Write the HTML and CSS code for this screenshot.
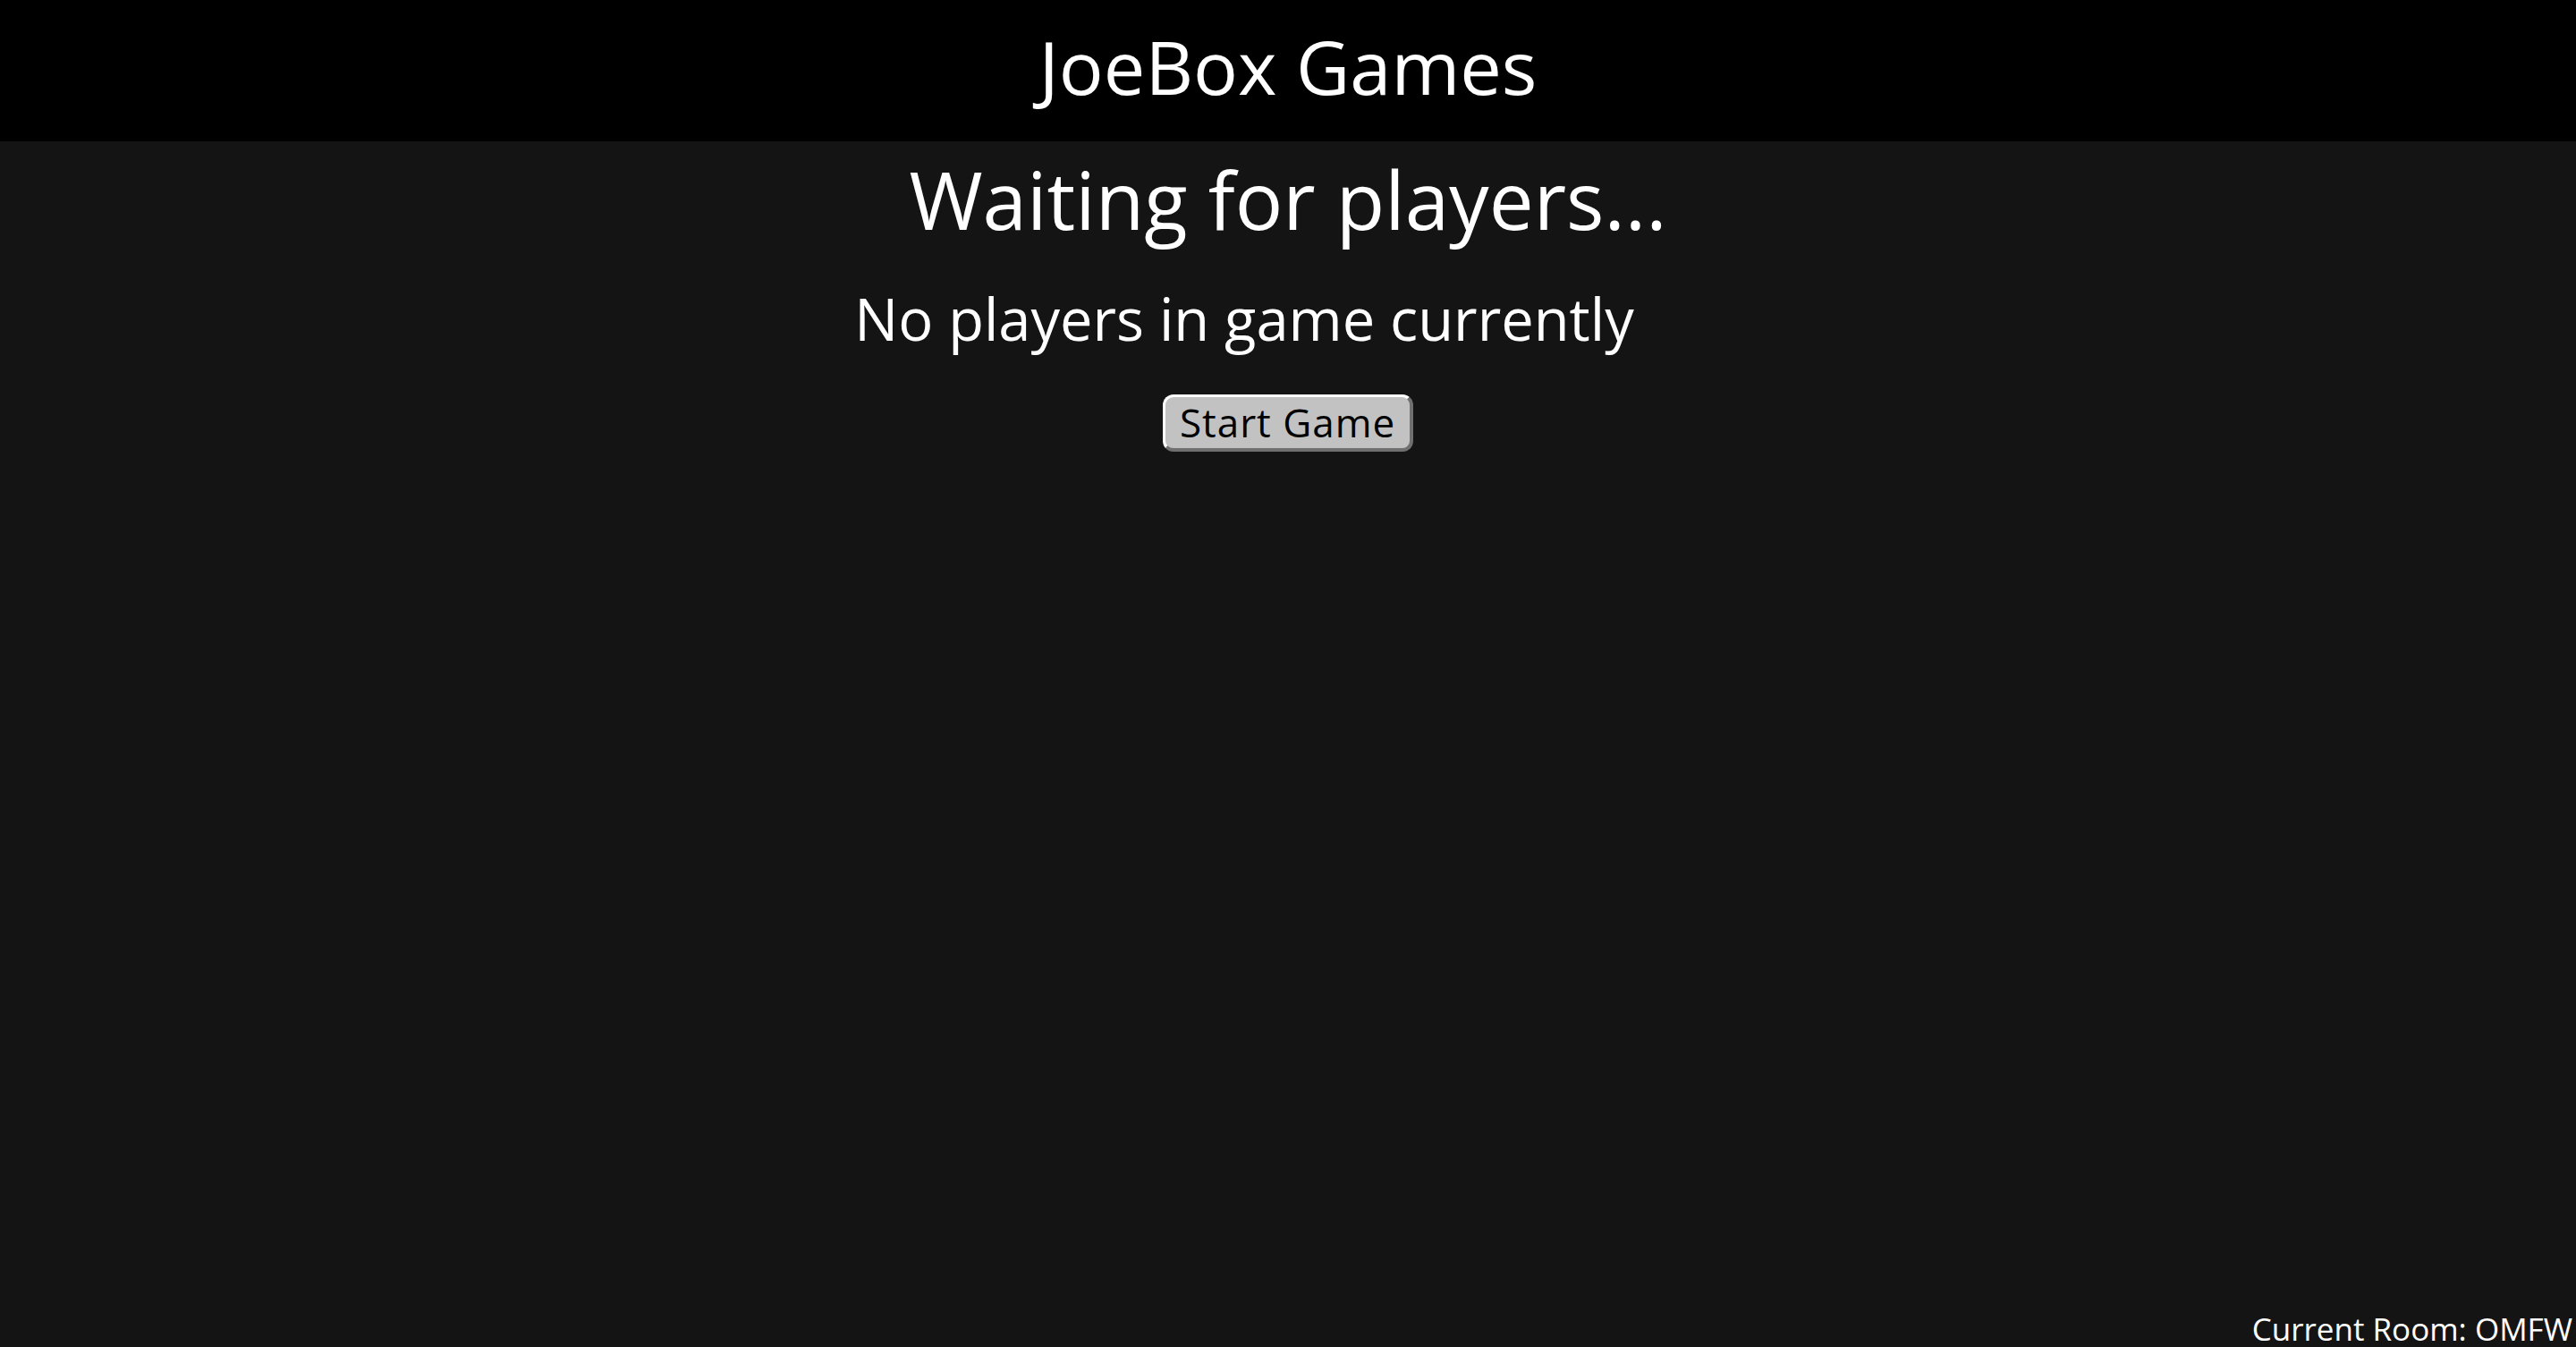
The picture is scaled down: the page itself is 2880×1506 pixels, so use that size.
FILE: index.html
```html
<!DOCTYPE html>
<html>
<head>
<meta charset="utf-8">
<link rel="stylesheet" href="styles.css">
</head>
<body>
<div class="app">
  <header class="topbar"><h1 class="brand">JoeBox Games</h1></header>
  <main class="lobby">
    <h2 class="status">Waiting for players...</h2>
    <p class="players">No players in game currently</p>
    <button class="start">Start Game</button>
  </main>
  <footer class="room">Current Room: OMFW</footer>
</div>
</body>
</html>
```
FILE: styles.css
```css
html, body {
  margin: 0;
  padding: 0;
  height: 100%;
}
body {
  background: #141414;
  color: #fff;
  font-family: "Open Sans", "Noto Sans", sans-serif;
}
.app {
  height: 100%;
  display: flex;
  flex-direction: column;
}
.topbar {
  background: #000;
  height: 158px;
  display: flex;
  align-items: center;
  justify-content: center;
}
.brand {
  margin: 0 0 12px;
  font-weight: 400;
  font-size: 83px;
  line-height: 1;
}
.lobby {
  flex: 1;
  display: flex;
  flex-direction: column;
  align-items: center;
}
.status {
  margin: 12px 0 0;
  font-weight: 400;
  font-size: 89px;
  line-height: 1.2;
}
.players {
  margin: 40px 0 0;
  padding-right: 98px;
  font-size: 65px;
  line-height: 1.2;
}
.start {
  margin-top: 46px;
  width: 280px;
  height: 64px;
  font-family: inherit;
  font-size: 44px;
  letter-spacing: 1px;
  line-height: 1;
  color: #000;
  background: #c2c2c2;
  border-style: solid;
  border-width: 3px 4px 4px 3px;
  border-color: #fff #707070 #707070 #fff;
  border-radius: 12px;
  padding: 0;
}
.room {
  align-self: flex-end;
  padding: 0 4px 0 0;
  font-size: 35px;
  line-height: 1.15;
}
```
